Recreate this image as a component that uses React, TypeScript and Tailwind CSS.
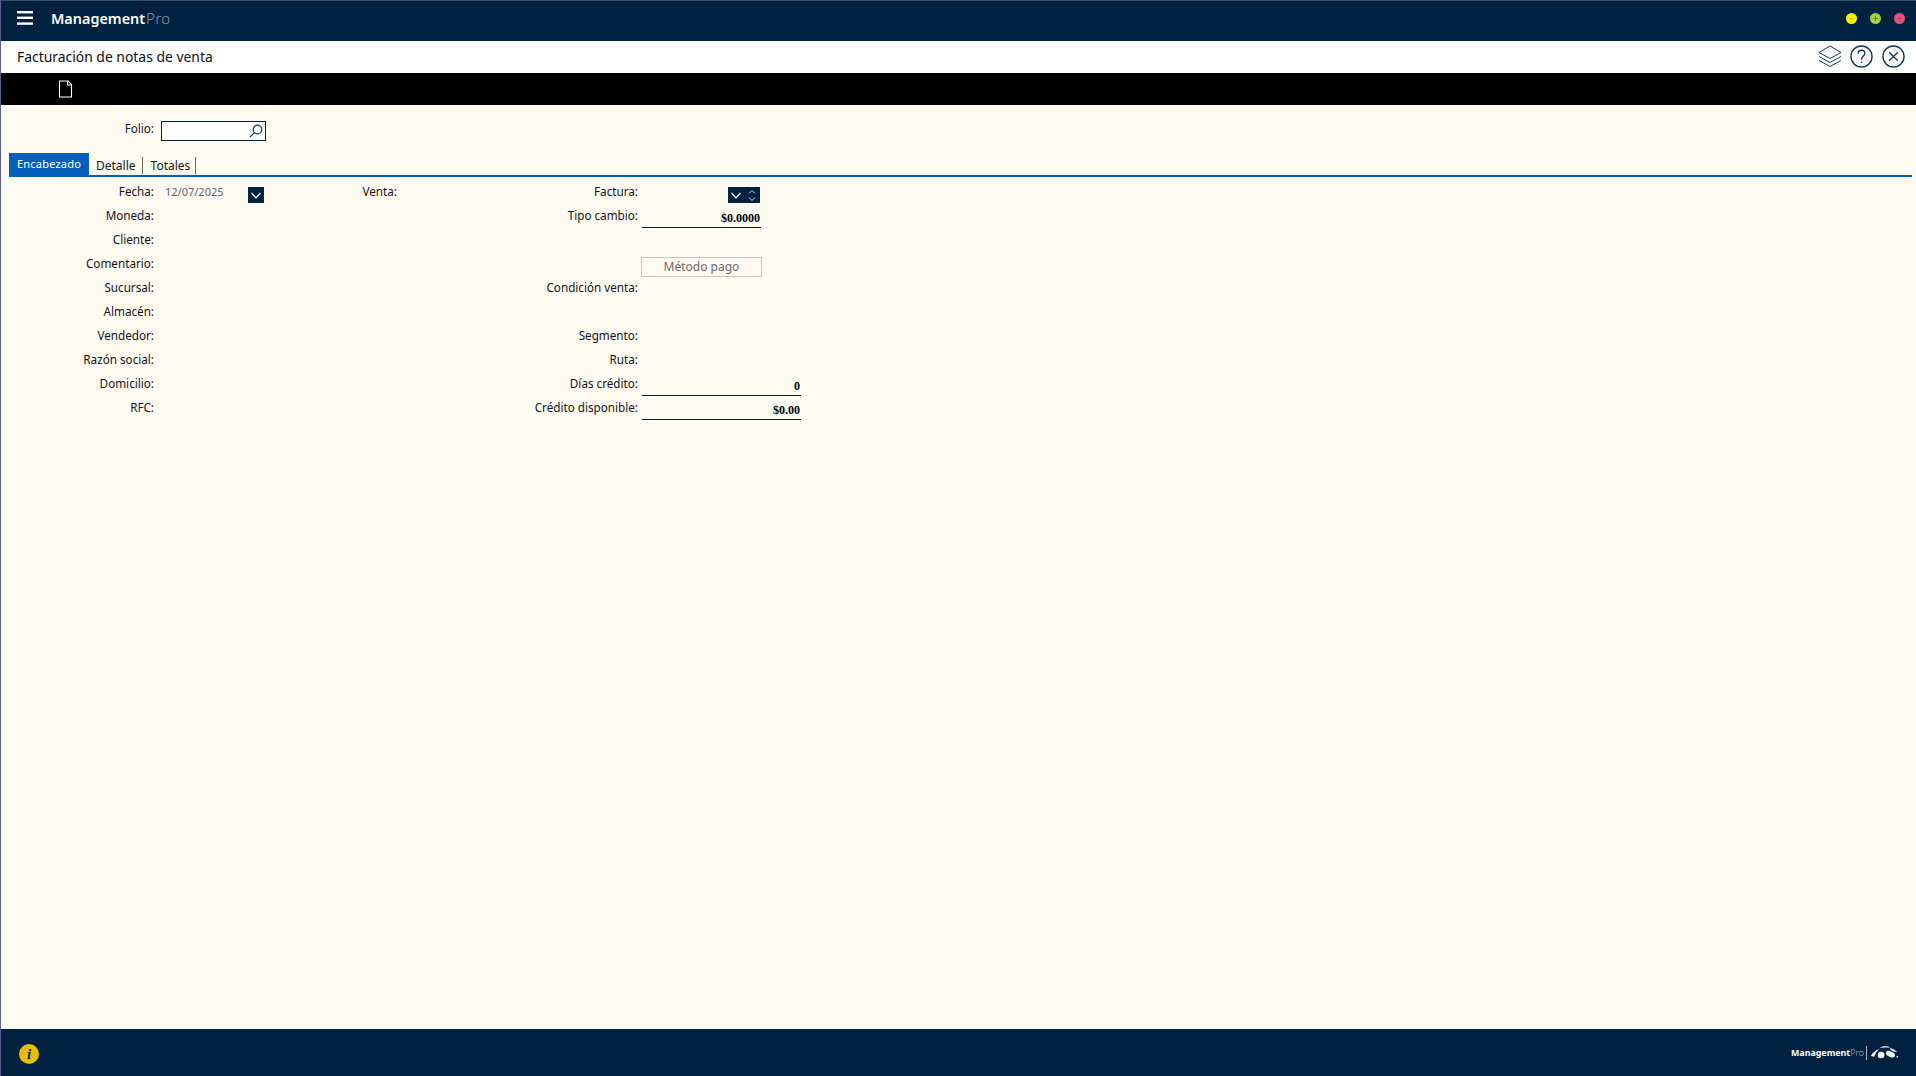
import React from "react";

function Label({ children }: { children: React.ReactNode }) {
  return <span className="inline-block -translate-y-px text-right text-[11.7px] leading-[24px] text-[#10141c] whitespace-nowrap">{children}</span>;
}

function Chevron({ size = 10 }: { size?: number }) {
  return (
    <svg width={size} height={size * 0.7} viewBox="0 0 10 7" fill="none" stroke="white" strokeWidth="1.2">
      <path d="M0.5 0.8 5 6 9.5 0.8" />
    </svg>
  );
}

function Logo() {
  return (
    <svg width="29" height="15" viewBox="0 0 34 16" fill="white">
      <path d="M1 12 C3 8 7 5 11 4 C8 7 6 9 5 13 Z" />
      <ellipse cx="13" cy="11" rx="4" ry="3.8" />
      <path d="M11 3 C15 0 20 0 24 2 C19 2 15 2 11 3 Z" />
      <ellipse cx="24" cy="10" rx="5.5" ry="3.2" transform="rotate(25 24 10)" />
      <path d="M23 3 C26 3 29 5 32 7 C28 8 25 6 23 3 Z" />
      <circle cx="32" cy="13" r="1" />
    </svg>
  );
}

function AmountRow({ label, value, width }: { label: string; value: string; width: string }) {
  return (
    <div className="flex h-6 items-center">
      <div className="flex w-[138px] justify-end"><Label>{label}</Label></div>
      <div className={`ml-1 flex h-6 items-center justify-end border-b border-[#002240] pr-px pt-[4px] text-[12px] font-bold text-black ${width}`} style={{ fontFamily: '"Liberation Serif", serif' }}>{value}</div>
    </div>
  );
}

function TextRow({ label }: { label: string }) {
  return (
    <div className="flex h-6 items-center">
      <div className="flex w-[138px] justify-end"><Label>{label}</Label></div>
    </div>
  );
}

export default function App() {
  const left = ["Moneda:", "Cliente:", "Comentario:", "Sucursal:", "Almacén:", "Vendedor:", "Razón social:", "Domicilio:", "RFC:"];
  return (
    <div className="flex h-[1076px] w-[1916px] flex-col overflow-hidden border-l border-[#5b5f8c] bg-[#fffbf0]" style={{ fontFamily: '"Noto Sans", sans-serif' }}>
      <header className="flex h-[41px] shrink-0 items-center justify-between border-t border-[#33506b] bg-[#002240] pb-[6px] pl-[16px] pr-[11px]">
        <div className="flex items-center">
          <svg width="16" height="14" viewBox="0 0 16 14" fill="white"><rect width="16" height="2.4" y="0" /><rect width="16" height="2.4" y="5.6" /><rect width="16" height="2.4" y="11.4" /></svg>
          <div className="ml-[18px] text-[14.4px] font-semibold text-white">Management<span className="ml-px text-[15px] font-light tracking-[0.4px] text-[#8796a6]">Pro</span></div>
        </div>
        <div className="flex items-center gap-[13px]">
          <span className="flex h-[11px] w-[11px] items-center justify-center rounded-full bg-[#fff200]"><span className="h-px w-[5px] bg-[#c9be00]" /></span>
          <span className="relative flex h-[11px] w-[11px] items-center justify-center rounded-full bg-[#a8d04f]"><span className="h-px w-[5px] bg-[#5e8a20]" /><span className="absolute h-[5px] w-px bg-[#5e8a20]" /></span>
          <span className="flex h-[11px] w-[11px] items-center justify-center rounded-full bg-[#e0557a]"><span className="h-px w-[3px] bg-[#a93a5a]" /></span>
        </div>
      </header>

      <div className="flex h-8 shrink-0 items-center justify-between bg-white pl-4 pr-[11px]">
        <span className="text-[13.9px] text-[#0a0f1a]">Facturación de notas de venta</span>
        <div className="flex -translate-y-px items-center text-[#0f3a5c]">
          <svg width="24" height="23" viewBox="0 0 24 23" fill="none" stroke="currentColor" strokeWidth="1">
            <path d="M12 1 23 7.5 12 13.5 1 7.5Z" />
            <path d="M1 11.5 12 17.5 23 11.5" />
            <path d="M1 15.5 12 21.5 23 15.5" />
          </svg>
          <svg className="ml-2" width="23" height="23" viewBox="0 0 24 24" fill="none" stroke="currentColor" strokeWidth="1.4">
            <circle cx="12" cy="12" r="11" />
            <path d="M8.5 9 C8.5 6.5 10 5.5 12 5.5 C14 5.5 15.5 6.8 15.5 8.8 C15.5 11.5 12 11.5 12 15" />
            <circle cx="12" cy="18" r="0.9" fill="currentColor" stroke="none" />
          </svg>
          <svg className="ml-[9px]" width="23" height="23" viewBox="0 0 24 24" fill="none" stroke="currentColor" strokeWidth="1.4">
            <circle cx="12" cy="12" r="11" />
            <path d="M7.5 7.5 16.5 16.5M16.5 7.5 7.5 16.5" />
          </svg>
        </div>
      </div>

      <div className="flex h-8 shrink-0 items-center bg-black pl-[57px]">
        <svg width="15" height="18" viewBox="0 0 15 18" fill="none" stroke="white" strokeWidth="1.1">
          <path d="M1.5 1 H10 L13.5 4.5 V17 H1.5 Z" />
          <path d="M9.5 1 V5 H13.5" />
        </svg>
      </div>

      <main className="flex min-h-0 flex-1 flex-col pl-2 pr-1">
        <div className="mt-4 flex h-5 items-center">
          <div className="-mt-[5px] flex w-[145px] justify-end"><Label>Folio:</Label></div>
          <div className="ml-[7px] flex h-[20px] w-[105px] items-center justify-end border border-[#002240] bg-white pr-[2px]">
            <svg width="14" height="14" viewBox="0 0 14 14" fill="none" stroke="#0f3a5c" strokeWidth="1.2">
              <circle cx="8.5" cy="5.5" r="4.3" />
              <path d="M5.4 8.6 1 13" />
            </svg>
          </div>
        </div>

        <div className="mt-3 flex h-6 items-start border-b-2 border-[#0560bd]">
          <div className="flex h-[22px] w-[80px] items-center justify-center bg-[#0560bd] text-[11px] tracking-[0.2px] text-white">Encabezado</div>
          <div className="mt-[4px] flex h-[17px] items-center border-r border-[#6b6b50] pl-[7px] pr-[6px] text-[12px] text-[#10141c]">Detalle</div>
          <div className="mt-[4px] flex h-[17px] items-center border-r border-[#6b6b50] pl-[8px] pr-[5px] text-[12px] text-[#10141c]">Totales</div>
        </div>

        <div className="mt-[3px] flex items-start">
          <div className="flex w-[145px] flex-col">
            <div className="flex h-6 justify-end"><Label>Fecha:</Label></div>
            {left.map((t) => (
              <div key={t} className="flex h-6 justify-end"><Label>{t}</Label></div>
            ))}
          </div>
          <div className="ml-[11px] flex h-6 w-[99px] items-center justify-between">
            <span className="text-[11px] text-[#5c6470]">12/07/2025</span>
            <span className="mt-[6px] flex h-4 w-4 items-center justify-center bg-[#002240]"><Chevron /></span>
          </div>
          <div className="ml-[93px] flex w-[40px] justify-end"><Label>Venta:</Label></div>
          <div className="ml-[103px] flex flex-col">
            <div className="flex h-6 items-center">
              <div className="flex w-[138px] justify-end"><Label>Factura:</Label></div>
              <div className="ml-[90px] mt-[6px] flex h-4 w-8 items-center bg-[#002240] pl-[3px]">
                <Chevron />
                <svg className="ml-[7px]" width="8" height="13" viewBox="0 0 8 13" fill="none" stroke="white" strokeWidth="0.8">
                  <path d="M1 4.5 4 1.5 7 4.5M1 8.5 4 11.5 7 8.5" />
                </svg>
              </div>
            </div>
            <AmountRow label="Tipo cambio:" value="$0.0000" width="w-[119px]" />
            <div className="h-6" />
            <div className="flex h-6 items-center">
              <div className="ml-[141px] mt-[6px] flex h-5 w-[121px] items-center justify-center border border-[#c4c4c4] text-[12px] text-[#6a6a78]">Método pago</div>
            </div>
            <TextRow label="Condición venta:" />
            <div className="h-6" />
            <TextRow label="Segmento:" />
            <TextRow label="Ruta:" />
            <AmountRow label="Días crédito:" value="0" width="w-[159px]" />
            <AmountRow label="Crédito disponible:" value="$0.00" width="w-[159px]" />
          </div>
        </div>
      </main>

      <footer className="flex h-[47px] shrink-0 items-center justify-between bg-[#002240] pl-[18px] pr-[17px]">
        <span className="mt-[3px] flex h-5 w-5 items-center justify-center rounded-full bg-[#e8bf00] text-[15px] font-bold italic leading-none text-[#002240]" style={{ fontFamily: '"Liberation Serif", serif' }}>i</span>
        <div className="flex items-center">
          <span className="text-[8.9px] font-bold text-white">Management<span className="font-light text-[#aab4bf]">Pro</span></span>
          <span className="ml-[2px] mr-[3px] h-[14px] w-px bg-[#aab4bf]" />
          <Logo />
        </div>
      </footer>
    </div>
  );
}
